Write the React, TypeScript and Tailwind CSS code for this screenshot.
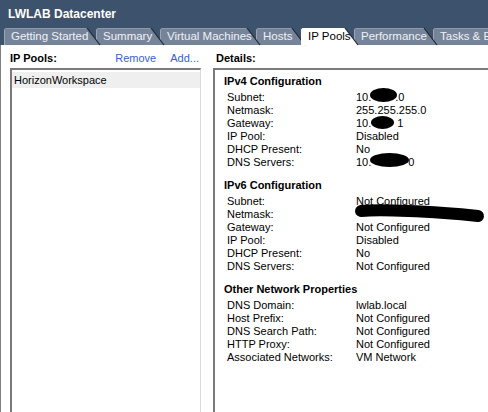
import React from "react";

type Tab = { label: string; w: number; wc: string; z: string; active?: boolean };

const tabs: Tab[] = [
  { label: "Getting Started", w: 92, wc: "w-[92px]", z: "z-[7]" },
  { label: "Summary", w: 64, wc: "w-[64px]", z: "z-[6]" },
  { label: "Virtual Machines", w: 96, wc: "w-[96px]", z: "z-[5]" },
  { label: "Hosts", w: 45, wc: "w-[45px]", z: "z-[4]" },
  { label: "IP Pools", w: 53, wc: "w-[53px]", z: "z-[10]", active: true },
  { label: "Performance", w: 79, wc: "w-[79px]", z: "z-[2]" },
  { label: "Tasks & Events", w: 90, wc: "w-[90px]", z: "z-[1]" },
];

function TabItem({ t }: { t: Tab }) {
  const W = t.w;
  const fill = t.active ? "#ffffff" : "#76849a";
  return (
    <div className={`relative h-[17px] shrink-0 ${t.wc} ${t.z}`}>
      <svg className="absolute left-0 top-0 overflow-visible" width={W + 5} height={17}>
        <polygon points={`0,17 0,1.5 1.5,0 ${W - 9},0 ${W + 4},17`} fill={fill} />
        {!t.active && (
          <>
            <line x1="0.5" y1="17" x2="0.5" y2="1.5" stroke="#9aa5b5" strokeWidth="1" />
            <line x1="1.5" y1="0.5" x2={W - 9} y2="0.5" stroke="#8d99ab" strokeWidth="1" />
          </>
        )}
        <line x1={W - 9} y1="0" x2={W + 4} y2="17" stroke="#1f2833" strokeWidth="1.2" />
      </svg>
      <span
        className={`relative block whitespace-nowrap pl-[7px] text-[11.5px] leading-[17px] ${
          t.active ? "text-black" : "text-[#eef1f5]"
        }`}
      >
        {t.label}
      </span>
    </div>
  );
}

function Row({ label, children }: { label: string; children: React.ReactNode }) {
  return (
    <div className="flex h-[13px] leading-[13px]">
      <div className="w-[132px] shrink-0 pl-[3px]">{label}</div>
      <div className="relative whitespace-nowrap">{children}</div>
    </div>
  );
}

function Blob({ wc, hc, top }: { wc: string; hc: string; top: string }) {
  return <span className={`relative inline-block align-top rounded-[50%] bg-black ${wc} ${hc} ${top}`} />;
}

function Section({ title, first, children }: { title: string; first?: boolean; children: React.ReactNode }) {
  return (
    <div className={first ? "" : "mt-[10px]"}>
      <div className="mb-[3px] h-[13px] font-bold leading-[13px]">{title}</div>
      {children}
    </div>
  );
}

export default function App() {
  return (
    <div
      className="h-[412px] w-[488px] overflow-hidden bg-white text-[11px] text-black"
      style={{ fontFamily: '"Liberation Sans", Arial, sans-serif' }}
    >
      {/* header */}
      <div className="h-[45px] bg-[#3d526c]">
        <div className="flex h-[28px] items-center pl-[8px] text-[12px] font-bold text-white">
          LWLAB Datacenter
        </div>
        <div className="flex h-[17px] pl-[4px]">
          {tabs.map((t) => (
            <TabItem key={t.label} t={t} />
          ))}
        </div>
      </div>

      {/* content */}
      <div className="flex h-[367px] border-l border-[#808080] bg-white">
        {/* left */}
        <div className="flex w-[200px] shrink-0 flex-col pl-[9px] pt-[7px]">
          <div className="flex h-[13px] items-center leading-[13px]">
            <span className="font-bold">IP Pools:</span>
            <span className="ml-auto text-[#3560d8]">Remove</span>
            <span className="ml-[14px] mr-[2px] text-[#3560d8]">Add...</span>
          </div>
          <div className="mt-[3px] flex-1 border-l-2 border-t-2 border-r border-[#7a7a7a] border-r-[#dadada] pt-[2px]">
            <div className="h-[16px] bg-[#efefef] pl-[2px] leading-[16px]">HorizonWorkspace</div>
          </div>
        </div>

        {/* right */}
        <div className="ml-[12px] flex flex-1 flex-col pt-[7px]">
          <div className="h-[13px] pl-[3px] font-bold leading-[13px]">Details:</div>
          <div className="mt-[3px] flex-1 border-l-2 border-t-2 border-[#7a7a7a] pl-[9px] pt-[5px]">
            <Section title="IPv4 Configuration" first>
              <Row label="Subnet:">
                10.
                <Blob wc="w-[27px]" hc="h-[14px]" top="top-[-3px] -ml-[1px]" />
                <span className="-ml-[2px]">.0</span>
              </Row>
              <Row label="Netmask:">255.255.255.0</Row>
              <Row label="Gateway:">
                10.
                <Blob wc="w-[23px]" hc="h-[13px]" top="top-[-1px]" />
                <span className="ml-[3px]">1</span>
              </Row>
              <Row label="IP Pool:">Disabled</Row>
              <Row label="DHCP Present:">No</Row>
              <Row label="DNS Servers:">
                10.
                <Blob wc="w-[39px]" hc="h-[14px]" top="top-[-3px] -ml-[1px]" />
                <span className="-ml-[1px]">0</span>
              </Row>
            </Section>

            <Section title="IPv6 Configuration">
              <Row label="Subnet:">Not Configured</Row>
              <Row label="Netmask:">
                <svg
                  className="absolute left-[-2px] top-[-5px] overflow-visible"
                  width="135"
                  height="22"
                >
                  <path
                    d="M7,8 C30,6 60,8 90,10 C105,11 115,12 124,13"
                    fill="none"
                    stroke="#000"
                    strokeWidth="12"
                    strokeLinecap="round"
                  />
                </svg>
              </Row>
              <Row label="Gateway:">Not Configured</Row>
              <Row label="IP Pool:">Disabled</Row>
              <Row label="DHCP Present:">No</Row>
              <Row label="DNS Servers:">Not Configured</Row>
            </Section>

            <Section title="Other Network Properties">
              <Row label="DNS Domain:">lwlab.local</Row>
              <Row label="Host Prefix:">Not Configured</Row>
              <Row label="DNS Search Path:">Not Configured</Row>
              <Row label="HTTP Proxy:">Not Configured</Row>
              <Row label="Associated Networks:">VM Network</Row>
            </Section>
          </div>
        </div>
      </div>
    </div>
  );
}
